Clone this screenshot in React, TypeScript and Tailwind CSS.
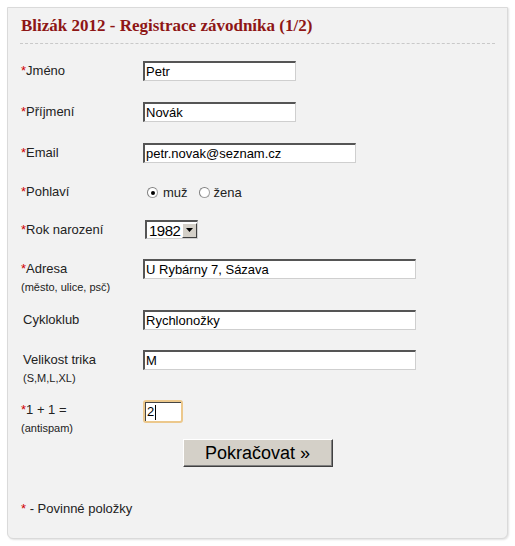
import React from "react";

const SANS = "font-['Liberation_Sans',Arial,sans-serif]";

const Req = () => <span className="text-[#d00000]">*</span>;

type FieldProps = {
  value: string;
  width: string;
};

const TextField = ({ value, width }: FieldProps) => (
  <input
    readOnly
    value={value}
    className={`${width} h-[20px] bg-white border-t-2 border-l-2 border-b border-r border-t-[#555] border-l-[#555] border-b-[#cfcfcf] border-r-[#cfcfcf] pl-[1px] text-[13px] leading-[16px] text-black outline-none ${SANS}`}
  />
);

const Radio = ({ checked }: { checked?: boolean }) => (
  <span className="w-[11px] h-[11px] rounded-full bg-white border border-[#a0a0a0] border-t-[#808080] border-l-[#808080] flex items-center justify-center">
    {checked && <span className="w-[4px] h-[4px] rounded-full bg-black" />}
  </span>
);

const Row = ({
  h,
  label,
  sub,
  children,
  indent,
}: {
  h: string;
  label: React.ReactNode;
  sub?: string;
  children: React.ReactNode;
  indent?: boolean;
}) => (
  <div className={`grid grid-cols-[123px_1fr] ${h}`}>
    <div className={`pt-[2px] ${indent ? "pl-[3px]" : "pl-[1px]"}`}>
      <div className="text-[13px] leading-[15px] text-[#222]">{label}</div>
      {sub && <div className="mt-[5px] text-[11px] leading-[13px] text-[#222]">{sub}</div>}
    </div>
    <div className="flex items-start">{children}</div>
  </div>
);

export default function App() {
  return (
    <div className={`min-h-[546px] bg-white pt-[7px] pl-[7px] ${SANS}`}>
      <div className="w-[501px] h-[532px] bg-[#f2f2f2] border border-[#dadada] rounded-b-[6px] shadow-[1px_1px_2px_rgba(0,0,0,0.12)] px-[12px]">
        <h1 className="pt-[8px] pb-[7px] pl-[1px] border-b border-dashed border-[#c9c9c9] text-[17px] leading-[20px] font-bold text-[#8e1616] font-['Liberation_Serif','Times_New_Roman',serif]">
          Blizák 2012 - Registrace závodníka (1/2)
        </h1>

        <form className="pt-[17px]">
          <Row h="h-[41px]" label={<><Req />Jméno</>}>
            <TextField value="Petr" width="w-[153px]" />
          </Row>
          <Row h="h-[41px]" label={<><Req />Příjmení</>}>
            <TextField value="Novák" width="w-[153px]" />
          </Row>
          <Row h="h-[39px]" label={<><Req />Email</>}>
            <TextField value="petr.novak@seznam.cz" width="w-[213px]" />
          </Row>
          <Row h="h-[38px]" label={<><Req />Pohlaví</>}>
            <div className="flex items-center pt-[3px] pl-[4px] text-[13px] leading-[15px] text-[#222]">
              <Radio checked />
              <span className="ml-[5px]">muž</span>
              <span className="ml-[11px]"><Radio /></span>
              <span className="ml-[4px]">žena</span>
            </div>
          </Row>
          <Row h="h-[39px]" label={<><Req />Rok narození</>}>
            <div className="ml-[2px] w-[53px] h-[19px] bg-white border-t-2 border-l-2 border-b border-r border-t-[#555] border-l-[#555] border-b-[#d0d0d0] border-r-[#d0d0d0] flex items-center justify-between">
              <span className="pl-[2px] text-[15px] leading-[15px] text-black tracking-[-0.5px]">1982</span>
              <span className="w-[15px] h-[15px] bg-[#d4d0c8] border border-t-white border-l-white border-b-[#404040] border-r-[#404040] flex items-center justify-center">
                <svg width="7" height="4" viewBox="0 0 7 4">
                  <path d="M0 0H7L3.5 4Z" fill="#000" />
                </svg>
              </span>
            </div>
          </Row>
          <Row h="h-[51px]" label={<><Req />Adresa</>} sub="(město, ulice, psč)">
            <TextField value="U Rybárny 7, Sázava" width="w-[273px]" />
          </Row>
          <Row h="h-[40px]" label="Cykloklub" indent>
            <TextField value="Rychlonožky" width="w-[273px]" />
          </Row>
          <Row h="h-[50px]" label="Velikost trika" sub="(S,M,L,XL)" indent>
            <TextField value="M" width="w-[273px]" />
          </Row>
          <Row h="h-[39px]" label={<><Req />1 + 1 =</>} sub="(antispam)">
            <div className="w-[40px] h-[23px] rounded-[3px] border-2 border-[#ecc88c] bg-white">
              <div className="relative h-full border-t border-l border-t-[#444] border-l-[#444] pl-[1px] text-[13px] leading-[18px] text-black">
                2
                <span className="absolute top-[2px] left-[9px] w-px h-[15px] bg-black" />
              </div>
            </div>
          </Row>

          <div className="flex justify-center">
            <button
              type="button"
              className="w-[150px] h-[28px] bg-[#d4d0c8] border border-t-white border-l-white border-b-[#404040] border-r-[#404040] shadow-[inset_-1px_-1px_0_#808080] text-[18px] leading-[20px] text-black"
            >
              Pokračovat »
            </button>
          </div>

          <p className="mt-[34px] pl-[1px] text-[13px] leading-[15px] text-[#222]">
            <Req /> - Povinné položky
          </p>
        </form>
      </div>
    </div>
  );
}
